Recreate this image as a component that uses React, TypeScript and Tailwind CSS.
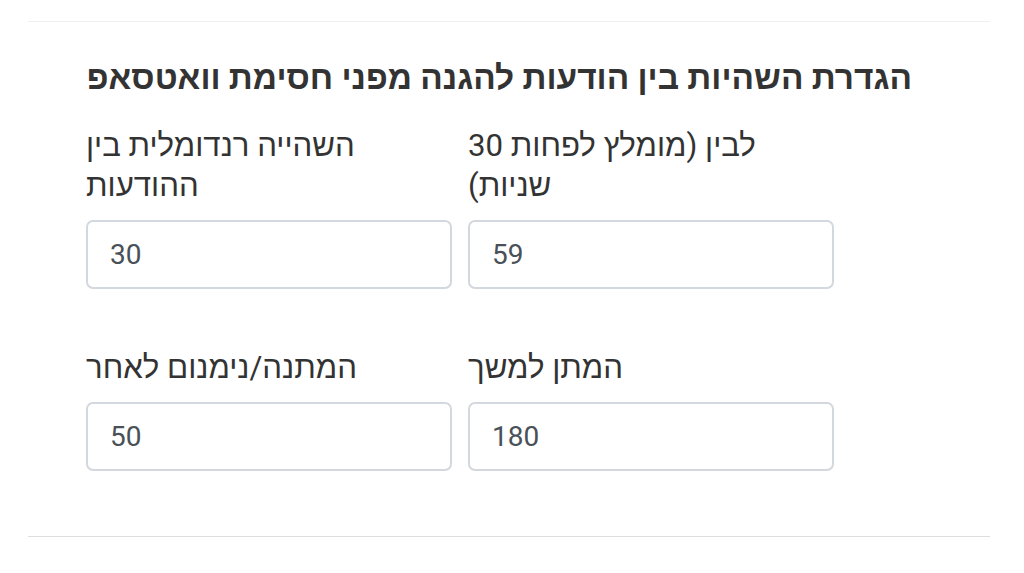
import React from "react";

const fields = [
  { label: "לבין (מומלץ לפחות 30 שניות)", value: "59" },
  { label: "השהייה רנדומלית בין ההודעות", value: "30" },
  { label: "המתן למשך", value: "180" },
  { label: "המתנה/נימנום לאחר", value: "50" },
];

export default function App() {
  return (
    <div
      className="w-[1024px] h-[573px] bg-white overflow-hidden pt-[21px]"
      style={{ fontFamily: 'Roboto, "Liberation Sans", Arial, sans-serif' }}
    >
      <div className="ml-[28px] w-[962px] border-t border-b border-t-[#efefef] border-b-[#dedede] pl-[58px] pt-[38px] pb-[65px]">
        <h2
          dir="rtl"
          className="w-[826px] text-right text-[33.4px] leading-[36px] font-bold text-[#333333] whitespace-nowrap"
        >
          הגדרת השהיות בין הודעות להגנה מפני חסימת וואטסאפ
        </h2>
        <div dir="rtl" className="mt-[30px] w-[748px] grid grid-cols-2 gap-x-4 gap-y-[59px]">
          {fields.map((f) => (
            <div key={f.label} className="flex flex-col">
              <label className="block text-left pr-[70px] text-[31.2px] leading-[40px] text-[#333333] mb-[14px]">
                {f.label}
              </label>
              <input
                dir="ltr"
                readOnly
                value={f.value}
                className="w-full h-[69px] rounded-[7px] border-2 border-[#d3d8de] bg-white px-[22px] text-left text-[28px] text-[#495057] outline-none"
                style={{ fontFamily: 'Roboto, "Liberation Sans", sans-serif' }}
              />
            </div>
          ))}
        </div>
      </div>
    </div>
  );
}
